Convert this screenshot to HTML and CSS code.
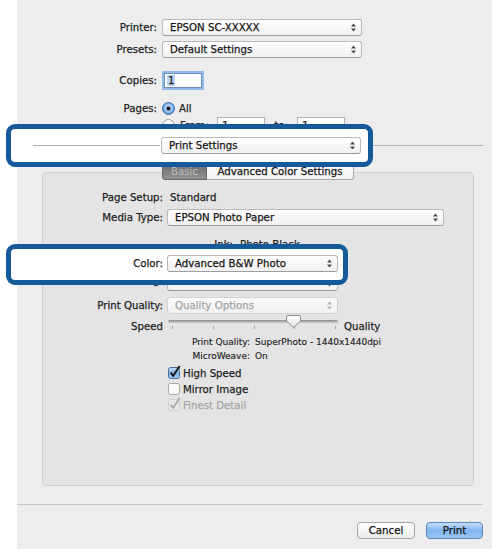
FILE: index.html
```html
<!DOCTYPE html>
<html>

<head>

    <meta charset="utf-8">
    <meta name="viewport" content="width=device-width, initial-scale=1.0">

    <title>Print</title>

    <link rel="stylesheet" href="styles.css">

</head>

<body>

    <div class="dialog">

        <div class="row row-popup">
            <span class="label">Printer:</span>
            <div class="popup w200"><span>EPSON SC-XXXXX</span><svg viewBox="0 0 5 9"><path d="M0 3.6 L2.5 0.6 L5 3.6 Z M0 5.4 L2.5 8.4 L5 5.4 Z"/></svg></div>
        </div>

        <div class="row row-popup gap5">
            <span class="label">Presets:</span>
            <div class="popup w200"><span>Default Settings</span><svg viewBox="0 0 5 9"><path d="M0 3.6 L2.5 0.6 L5 3.6 Z M0 5.4 L2.5 8.4 L5 5.4 Z"/></svg></div>
        </div>

        <div class="row row-copies">
            <span class="label">Copies:</span>
            <div class="copies"><span class="selected">1</span></div>
        </div>

        <div class="row row-pages">
            <span class="label">Pages:</span>
            <svg class="radio" viewBox="0 0 13 13">
                <defs>
                    <radialGradient id="radioOn" cx="50%" cy="45%" r="60%">
                        <stop offset="0" stop-color="#dcecfc"/>
                        <stop offset="0.55" stop-color="#8fbdf0"/>
                        <stop offset="1" stop-color="#3f7fd0"/>
                    </radialGradient>
                </defs>
                <circle cx="6.5" cy="6.5" r="6" fill="url(#radioOn)" stroke="#3b6eae"/>
                <circle cx="6.5" cy="6.5" r="2" fill="#141414"/>
            </svg>
            <span class="radio-text">All</span>
        </div>

        <div class="row row-from">
            <span class="label"></span>
            <svg class="radio" viewBox="0 0 13 13"><circle cx="6.5" cy="6.5" r="6" fill="#fafafa" stroke="#9a9a9a"/></svg>
            <span class="from-text">From:</span>
            <div class="field">1</div>
            <span class="to-text">to:</span>
            <div class="field">1</div>
        </div>

        <!-- section chooser with the callout frame behind it -->
        <div class="row section">
            <div class="callout callout-section"></div>
            <div class="line line-left"></div>
            <div class="popup w200"><span>Print Settings</span><svg viewBox="0 0 5 9"><path d="M0 3.6 L2.5 0.6 L5 3.6 Z M0 5.4 L2.5 8.4 L5 5.4 Z"/></svg></div>
            <div class="line line-right"></div>
        </div>

        <div class="panel">

            <div class="tabs">
                <div class="tab tab-on">Basic</div>
                <div class="tab tab-off">Advanced Color Settings</div>
            </div>

            <div class="row prow-text">
                <span class="plabel">Page Setup:</span>
                <span class="value">Standard</span>
            </div>

            <div class="row prow-popup gap5">
                <span class="plabel">Media Type:</span>
                <div class="popup w277"><span>EPSON Photo Paper</span><svg viewBox="0 0 5 9"><path d="M0 3.6 L2.5 0.6 L5 3.6 Z M0 5.4 L2.5 8.4 L5 5.4 Z"/></svg></div>
            </div>

            <div class="row prow-ink">
                <span class="inklabel">Ink:</span>
                <span>Photo Black</span>
            </div>

            <div class="row prow-popup color-row">
                <div class="callout callout-color"></div>
                <span class="plabel">Color:</span>
                <div class="popup w171"><span>Advanced B&amp;W Photo</span><svg viewBox="0 0 5 9"><path d="M0 3.6 L2.5 0.6 L5 3.6 Z M0 5.4 L2.5 8.4 L5 5.4 Z"/></svg></div>
            </div>

            <div class="row prow-popup toning-row">
                <span class="plabel">Color Toning:</span>
                <div class="popup w171"><span></span><svg viewBox="0 0 5 9"><path d="M0 3.6 L2.5 0.6 L5 3.6 Z M0 5.4 L2.5 8.4 L5 5.4 Z"/></svg></div>
            </div>

            <div class="row prow-popup gap6">
                <span class="plabel">Print Quality:</span>
                <div class="popup w171 disabled"><span>Quality Options</span><svg viewBox="0 0 5 9"><path d="M0 3.6 L2.5 0.6 L5 3.6 Z M0 5.4 L2.5 8.4 L5 5.4 Z"/></svg></div>
            </div>

            <div class="row prow-speed">
                <span class="plabel speed-label">Speed</span>
                <div class="slider">
                    <div class="track"></div>
                    <div class="ticks"><i></i><i></i><i></i><i></i><i></i></div>
                    <svg class="thumb" viewBox="0 0 15 13">
                        <defs>
                            <linearGradient id="thumbFill" x1="0" y1="0" x2="0" y2="1">
                                <stop offset="0" stop-color="#ffffff"/>
                                <stop offset="1" stop-color="#e2e2e2"/>
                            </linearGradient>
                        </defs>
                        <path d="M2 0.5 H13 Q14.5 0.5 14.5 2 V6 L7.5 12.5 L0.5 6 V2 Q0.5 0.5 2 0.5 Z" fill="url(#thumbFill)" stroke="#8c8c8c"/>
                    </svg>
                </div>
                <span class="quality-label">Quality</span>
            </div>

            <div class="row info">
                <span class="ilabel">Print Quality:</span>
                <span>SuperPhoto - 1440x1440dpi</span>
            </div>

            <div class="row info">
                <span class="ilabel">MicroWeave:</span>
                <span>On</span>
            </div>

            <div class="checks">
                <div class="row check-row">
                    <svg class="cb" viewBox="0 0 14 14">
                        <defs>
                            <linearGradient id="boxOn" x1="0" y1="0" x2="0" y2="1">
                                <stop offset="0" stop-color="#c9e0f8"/>
                                <stop offset="0.5" stop-color="#7fb3ea"/>
                                <stop offset="1" stop-color="#a9cdf3"/>
                            </linearGradient>
                        </defs>
                        <rect x="0.5" y="2.5" width="11" height="11" rx="2" fill="url(#boxOn)" stroke="#456f9f"/>
                        <path d="M2.6 7.6 L5.2 10.8 L11.6 1" fill="none" stroke="#151515" stroke-width="1.9"/>
                    </svg>
                    <span>High Speed</span>
                </div>
                <div class="row check-row">
                    <svg class="cb" viewBox="0 0 14 14"><rect x="0.5" y="2.5" width="11" height="11" rx="2" fill="#fbfbfb" stroke="#a9a9a9"/></svg>
                    <span>Mirror Image</span>
                </div>
                <div class="row check-row dim">
                    <svg class="cb" viewBox="0 0 14 14">
                        <rect x="0.5" y="2.5" width="11" height="11" rx="2" fill="#e8e8e8" stroke="#d2d2d2"/>
                        <path d="M2.6 7.6 L5.2 10.8 L11.6 1" fill="none" stroke="#a8a8a8" stroke-width="1.7"/>
                    </svg>
                    <span>Finest Detail</span>
                </div>
            </div>

        </div>

        <div class="divider"></div>

        <div class="buttons">
            <button class="btn">Cancel</button>
            <button class="btn btn-default">Print</button>
        </div>

    </div>

</body>

</html>
```

FILE: styles.css
```css
body {
    margin: 0;
    background-color: #ffffff;
    font-family: "DejaVu Sans", "Lucida Grande", sans-serif;
    font-size: 10.2px;
    color: #1e1e1e;
}

.dialog {
    margin-left: 17px;
    width: 475px;
    height: 549px;
    padding-top: 19px;
    box-sizing: border-box;
    background-color: #ededed;
    -webkit-text-stroke: 0.25px;
}

.row {
    display: flex;
    align-items: center;
    white-space: nowrap;
}

.label {
    width: 140px;
    margin-right: 5px;
    text-align: right;
}

/* pop-up buttons */
.popup {
    display: flex;
    align-items: center;
    justify-content: space-between;
    box-sizing: border-box;
    height: 17px;
    padding: 0 5px 0 7px;
    background: linear-gradient(#ffffff, #f1f1f1);
    border: 1px solid #bababa;
    border-bottom-color: #9e9e9e;
    border-radius: 3px;
    color: #161616;
}

.popup svg {
    width: 5px;
    height: 9px;
    fill: #4a4a4a;
}

.popup.disabled {
    color: #a4a4a4;
    border-color: #d3d3d3;
    background: linear-gradient(#fafafa, #f1f1f1);
}

.popup.disabled svg {
    fill: #b4b4b4;
}

.w200 { width: 200px; }
.w277 { width: 277px; }
.w171 { width: 171px; }

.row-popup { height: 17px; }
.gap5 { margin-top: 5px; }
.gap6 { margin-top: 6px; }

.row-copies {
    margin-top: 13px;
    height: 18px;
}

.copies {
    display: flex;
    align-items: center;
    box-sizing: border-box;
    width: 38px;
    height: 15px;
    margin-left: 2px;
    padding-left: 2px;
    background-color: #fff;
    border: 1px solid #6d8db6;
    box-shadow: 0 0 0 2px #92bbec;
}

.selected {
    background-color: #b9d4f2;
    padding: 0 1px;
}

.row-pages {
    margin-top: 12px;
    height: 14px;
}

.radio {
    width: 13px;
    height: 13px;
}

.radio-text {
    margin-left: 4px;
}

.row-from {
    margin-top: 2px;
    height: 17px;
}

.from-text {
    width: 37px;
    padding-left: 5px;
}

.to-text {
    width: 32px;
    text-align: center;
}

.field {
    box-sizing: border-box;
    width: 48px;
    height: 17px;
    padding: 2px 0 0 4px;
    background-color: #fff;
    border: 1px solid #b3b3b3;
}

/* Print Settings chooser over the separator */
.section {
    position: relative;
    z-index: 1;
    margin-top: 3px;
    height: 17px;
    padding-left: 16px;
}

.line {
    height: 1px;
    background-color: #b3b3b3;
}

.line-left {
    width: 127px;
    margin-right: 1px;
}

.line-right {
    width: 110px;
    margin-left: 12px;
}

.callout {
    position: absolute;
    z-index: -1;
    box-sizing: border-box;
    background-color: #ffffff;
    border: 5px solid #14599a;
    border-radius: 9px;
}

.callout-section {
    left: -11px;
    top: -13px;
    width: 367px;
    height: 43px;
}

.callout-color {
    left: -37px;
    top: -11px;
    width: 342px;
    height: 41px;
}

/* settings panel */
.panel {
    width: 432px;
    height: 314px;
    margin: 18px 0 0 25px;
    box-sizing: border-box;
    background-color: #e4e4e4;
    border: 1px solid #d0d0d0;
    border-radius: 4px;
}

.tabs {
    display: flex;
    height: 17px;
    margin: -10px 0 0 119px;
}

.tab {
    display: flex;
    align-items: center;
    justify-content: center;
    box-sizing: border-box;
    height: 17px;
}

.tab-on {
    width: 45px;
    background: linear-gradient(#6c6c6c, #929292);
    border: 1px solid #666;
    border-radius: 3px 0 0 3px;
    color: #bcbcbc;
    -webkit-text-stroke: 0;
}

.tab-off {
    width: 147px;
    background: linear-gradient(#ffffff, #f0f0f0);
    border: 1px solid #ababab;
    border-left: none;
    border-radius: 0 3px 3px 0;
    color: #161616;
}

.plabel {
    width: 120px;
    margin-right: 4px;
    text-align: right;
}

.prow-text {
    margin-top: 10px;
    height: 14px;
}

.value {
    margin-left: 3px;
}

.prow-popup {
    height: 17px;
}

.prow-ink {
    margin-top: 11px;
    height: 14px;
}

.inklabel {
    width: 190px;
    margin-right: 7px;
    text-align: right;
}

.color-row {
    position: relative;
    z-index: 1;
    margin-top: 4px;
}

.toning-row {
    margin-top: 2px;
}

/* only the descenders of this label peek out below the color frame */
.toning-row .plabel {
    margin-bottom: 5px;
}

.prow-speed {
    margin-top: 2px;
    height: 18px;
}

.speed-label {
    margin-right: 5px;
    margin-top: 2px;
}

.slider {
    position: relative;
    width: 170px;
    height: 18px;
}

.track {
    height: 3px;
    margin-top: 4px;
    border-radius: 2px;
    background: linear-gradient(#8a8a8a, #cfcfcf);
}

.ticks {
    display: flex;
    justify-content: space-between;
    height: 3px;
    margin-top: 3px;
    padding: 0 2px 0 4px;
}

.ticks i {
    width: 1px;
    background-color: #a0a0a0;
}

.thumb {
    position: absolute;
    left: 118px;
    top: -1px;
    width: 15px;
    height: 13px;
}

.quality-label {
    margin: 2px 0 0 6px;
}

.info {
    margin-top: 2px;
    height: 12px;
    font-size: 9px;
    -webkit-text-stroke: 0.15px;
}

.ilabel {
    width: 207px;
    margin-right: 5px;
    text-align: right;
}

.checks {
    margin: 3px 0 0 125px;
}

.check-row {
    height: 16px;
}

.cb {
    width: 14px;
    height: 14px;
    margin: -3px 1px 0 0;
}

.dim {
    color: #a6a6a6;
}

.divider {
    height: 1px;
    margin: 18px 9px 0 0;
    background-color: #c8c8c8;
}

.buttons {
    display: flex;
    justify-content: flex-end;
    margin-top: 17px;
    padding-right: 9px;
    gap: 11px;
}

.btn {
    box-sizing: border-box;
    width: 58px;
    height: 17px;
    padding: 0;
    font-family: "DejaVu Sans", "Lucida Grande", sans-serif;
    font-size: 10.2px;
    color: #161616;
    -webkit-text-stroke: 0.25px;
    background: linear-gradient(#ffffff, #ececec);
    border: 1px solid #a6a6a6;
    border-radius: 4px;
}

.btn-default {
    width: 57px;
    background: linear-gradient(#c4def8, #7fb5ee 50%, #9cc8f4);
    border-color: #5b87be;
}
```
